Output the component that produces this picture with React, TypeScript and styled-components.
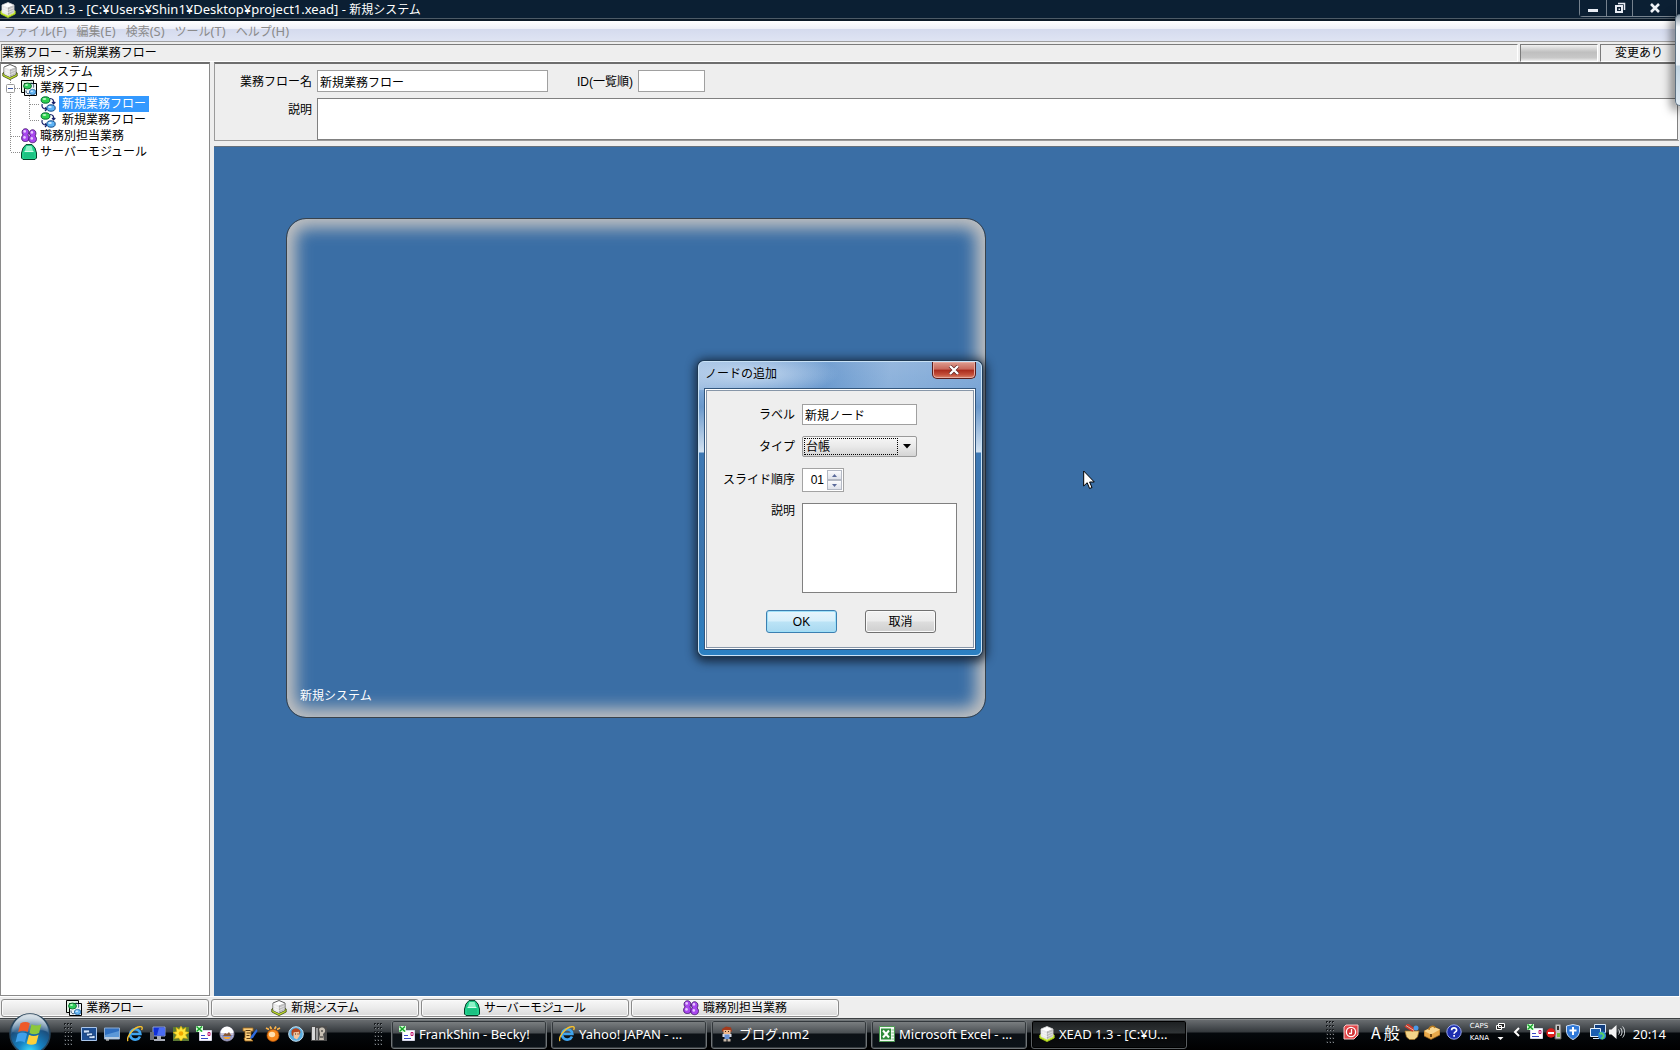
import React from "react";
import styled, { createGlobalStyle, css } from "styled-components";

const ui = `"Liberation Sans", "Noto Sans CJK JP", sans-serif`;
const shell = `"Noto Sans", "Noto Sans CJK JP", sans-serif`;

const GlobalStyle = createGlobalStyle`
  * { box-sizing: border-box; }
  body { margin: 0; background: #eeeeee; }
  button, input, select, textarea { font: inherit; color: inherit; margin: 0; border-radius: 0; }
  svg { display: block; flex: none; }
`;

const Desktop = styled.div`
  position: relative;
  display: flex;
  flex-direction: column;
  height: 100vh;
  overflow: hidden;
  background: #eeeeee;
  color: #000;
  font: 12px/16px ${ui};
`;

/* ---------- window chrome ---------- */
const TitleBar = styled.header`
  display: flex;
  align-items: flex-start;
  height: 21px;
  flex: none;
  background: linear-gradient(#0b1f33 0 18px, #4d5a66 18px 19px, #0a1826 19px);
  color: #fff;
  font-family: ${shell};
`;
const TitleText = styled.h1`
  flex: 1;
  margin: 0;
  padding: 1px 5px;
  font-size: 12px;
  font-weight: 400;
  line-height: 17px;
  white-space: pre;
`;
const Latin = styled.span`
  font-size: 13px;
`;
const TitleIcon = styled.span`
  padding-top: 2px;
`;
const WindowButtons = styled.div`
  display: flex;
  height: 17px;
  margin-right: 3px;
  border: 1px solid #76828e;
  border-top: 0;
  border-radius: 0 0 4px 4px;
`;
const WindowButton = styled.button<{ $wide?: boolean }>`
  display: flex;
  align-items: center;
  justify-content: center;
  width: ${(p) => (p.$wide ? 44 : 26)}px;
  padding: 0;
  border: 0;
  background: #0b1f33;
  & + & { border-left: 1px solid #76828e; }
`;
const MenuBar = styled.nav`
  display: flex;
  gap: 10px;
  height: 21px;
  flex: none;
  padding: 0 4px;
  background: linear-gradient(#ffffff, #eef0f8 40%, #d5dbee 42%, #dfe4f3);
  border-bottom: 1px solid #a0a0a0;
`;
const MenuItem = styled.button`
  padding: 0;
  border: 0;
  background: none;
  color: #8b8b8b;
  line-height: 20px;
  font-family: ${shell};
`;

const StatusRow = styled.div`
  display: flex;
  gap: 2px;
  height: 18px;
  flex: none;
  margin-top: 2px;
  padding: 0 2px 0 1px;
`;
const StatusCell = styled.div<{ $width?: number }>`
  ${(p) => (p.$width ? css`width: ${p.$width}px; text-align: center;` : css`flex: 1;`)}
  border: 1px solid #7b7b7b;
  border-right-color: #fff;
  border-bottom-color: #fff;
  line-height: 16px;
`;
const ProgressCell = styled(StatusCell)`
  background: linear-gradient(#f0f0f0, #bfbfbf 45%, #c8c8c8 80%, #eeeeee);
`;

/* ---------- work area ---------- */
const WorkArea = styled.div`
  display: grid;
  grid-template-columns: 210px 1fr;
  gap: 4px;
  flex: 1;
  min-height: 0;
`;
const TreePane = styled.aside`
  border: 1px solid #8a8a8a;
  border-top: 2px solid #6e6e6e;
  background: #fff;
`;
const TreeRow = styled.div`
  display: flex;
  height: 16px;
  padding-left: 1px;
`;
const TreeLabel = styled.span<{ $leaf?: boolean; $selected?: boolean }>`
  margin-left: 3px;
  padding: 0 ${(p) => (p.$leaf ? 3 : 0)}px;
  ${(p) => p.$selected && css`background: #3399ff; color: #fff;`}
`;
const Editor = styled.main`
  display: flex;
  flex-direction: column;
  min-width: 0;
  padding-right: 1px;
`;
const FormPanel = styled.section`
  display: grid;
  gap: 6px;
  padding-top: 6px;
  border: 1px solid #9a9a9a;
  border-top: 2px solid #6e6e6e;
  border-right: 0;
`;
const FormRow = styled.div`
  display: flex;
  gap: 5px;
`;
const FormLabel = styled.label<{ $auto?: boolean }>`
  width: ${(p) => (p.$auto ? "auto" : "97px")};
  margin-left: ${(p) => (p.$auto ? 24 : 0)}px;
  padding-top: 4px;
  text-align: right;
`;
const TextInput = styled.input<{ $width: number; $compact?: boolean }>`
  width: ${(p) => p.$width}px;
  height: ${(p) => (p.$compact ? 21 : 22)}px;
  padding: 0 2px;
  border: 1px solid #a0a0a0;
  background: #fff;
  outline: 0;
`;
const TextArea = styled.textarea<{ $height: number; $width?: number }>`
  ${(p) => (p.$width ? css`width: ${p.$width}px;` : css`flex: 1; margin-right: 1px;`)}
  height: ${(p) => p.$height}px;
  padding: 2px;
  border: 1px solid #808080;
  background: #fff;
  outline: 0;
  resize: none;
`;
const Canvas = styled.section`
  position: relative;
  flex: 1;
  margin-top: 5px;
  border-top: 1px solid #64707c;
  background: #3a6ea5;
`;
const SystemNode = styled.div`
  position: absolute;
  left: 72px;
  top: 71px;
  display: flex;
  align-items: flex-end;
  width: 700px;
  height: 500px;
  padding: 13px;
  border: 1px solid #38424c;
  border-radius: 20px;
  box-shadow: inset 0 0 16px 9px #c0c0c0;
  color: #fff;
`;
const Pointer = styled.svg`
  position: absolute;
  left: 869px;
  top: 323px;
`;

/* ---------- dialog ---------- */
const Dialog = styled.section`
  position: absolute;
  left: 698px;
  top: 361px;
  width: 284px;
  padding: 0 5px 5px;
  border: 1px solid #c9e2f6;
  border-radius: 6px;
  background:
    radial-gradient(ellipse 90px 22px at 50px 12px, #c4d8ef, transparent),
    linear-gradient(100deg, #ffffff40, #ffffff00 60px, #2f6eb430 130px, #ffffff20 190px, #ffffff00) 0 0 / 100% 28px no-repeat,
    linear-gradient(#86add9 0, #7aa5d5 28px, #6a98cb 45px, #d3e2f1 90px, #3d78b4 91px, #3b74ad 200px, #2b80c2);
  box-shadow: 0 0 0 1px #1f3a55, 1px 2px 10px 4px #101c2acc;
`;
const DialogTitle = styled.div`
  display: flex;
  justify-content: space-between;
  height: 26px;
  font-family: ${shell};
`;
const DialogName = styled.h2`
  margin: 0;
  padding: 4px 0 0 1px;
  font-size: 12px;
  font-weight: 400;
`;
const CloseButton = styled.button`
  display: flex;
  align-items: center;
  justify-content: center;
  width: 44px;
  height: 17px;
  padding: 0;
  border: 1px solid #5b1d1c;
  border-top: 0;
  border-radius: 0 0 5px 5px;
  box-shadow: inset 0 0 0 1px #e7aaa0;
  background: linear-gradient(#dd9d90, #c8675a 45%, #a92a1c 50%, #c4503c 80%, #d98a70);
`;
const DialogBody = styled.form`
  display: grid;
  gap: 11px;
  padding: 15px 0 16px;
  border: 1px solid #33567c;
  box-shadow: inset 0 0 0 1px #fff, inset 0 0 0 2px #8796a8;
  background: #eeeeee;
`;
const Field = styled.div<{ $top?: boolean }>`
  display: grid;
  grid-template-columns: 90px auto;
  justify-content: start;
  align-items: ${(p) => (p.$top ? "start" : "center")};
  gap: 7px;
`;
const FieldLabel = styled.label`
  text-align: right;
`;
const SelectBox = styled.span`
  display: grid;
  width: 115px;
  height: 21px;
  border: 1px solid #9a9a9a;
  border-radius: 2px;
  background: linear-gradient(#f7f7f7, #e9e9e9 50%, #d4d4d4);
  > * { grid-area: 1 / 1; }
  svg { justify-self: end; align-self: center; margin-right: 4px; pointer-events: none; }
`;
const Select = styled.select`
  appearance: none;
  width: 94px;
  margin: 1px;
  padding: 0 1px;
  border: 1px dotted #000;
  background: none;
  line-height: 14px;
  outline: 0;
`;
const Spinner = styled.span`
  display: grid;
  grid-template: 1fr 1fr / 1fr 15px;
  width: 42px;
  height: 24px;
  padding: 1px;
  border: 1px solid #a3a3a3;
  background: #fff;
`;
const SpinnerInput = styled.input`
  grid-row: span 2;
  width: 100%;
  min-width: 0;
  padding: 0 3px 0 0;
  border: 0;
  background: none;
  text-align: right;
  outline: 0;
`;
const SpinnerButton = styled.button`
  display: flex;
  align-items: center;
  justify-content: center;
  padding: 0;
  border: 1px solid #b4b9c4;
  background: linear-gradient(#fbfbfd, #dfe2ea);
`;
const DialogActions = styled.div`
  display: flex;
  gap: 28px;
  padding: 6px 0 0 61px;
`;
const PushButton = styled.button<{ $primary?: boolean }>`
  width: 71px;
  height: 23px;
  padding: 0;
  border: 1px solid ${(p) => (p.$primary ? "#3c7fb1" : "#707070")};
  border-radius: 3px;
  background: ${(p) =>
    p.$primary
      ? "linear-gradient(#e8f5fc, #d6effb 48%, #bbe3f6 52%, #a9d9f1)"
      : "linear-gradient(#f2f2f2, #ebebeb 48%, #dddddd 52%, #cfcfcf)"};
  box-shadow: inset 0 0 0 1px ${(p) => (p.$primary ? "#9fe0f8" : "#fafafa")};
`;

/* ---------- bottom bars ---------- */
const TabStrip = styled.nav`
  display: flex;
  gap: 2px;
  height: 22px;
  flex: none;
  padding: 2px 1px 1px;
  border-top: 1px solid #fff;
`;
const TabButton = styled.button`
  display: flex;
  align-items: center;
  justify-content: center;
  gap: 4px;
  width: 208px;
  padding: 0;
  border: 1px solid #8a8a8a;
  border-radius: 3px;
  background: linear-gradient(#f8f8f8, #ebebeb 50%, #dadada);
  box-shadow: inset 0 0 0 1px #fafafa;
  font-feature-settings: "palt";
  line-height: 16px;
`;
const Taskbar = styled.footer`
  position: relative;
  display: flex;
  align-items: center;
  height: 32px;
  flex: none;
  padding: 0 14px 0 64px;
  background: linear-gradient(#3c4043 0 1px, #85898b 1px 2px, #686c6f 2px, #34393d 14px, #04080c 15px, #000 100%);
  color: #fff;
  font: 13px/16px ${shell};
`;
const StartOrb = styled.button`
  position: absolute;
  left: 9px;
  top: -5px;
  padding: 0;
  border: 0;
  background: none;
`;
const QuickLaunch = styled.div`
  display: flex;
  gap: 7px;
  width: 293px;
  margin-left: 8px;
`;
const IconButton = styled.button`
  width: 16px;
  height: 16px;
  padding: 0;
  border: 0;
  background: none;
`;
const TaskList = styled.div`
  display: flex;
  gap: 4px;
  flex: 1;
  margin-left: 8px;
`;
const TaskButton = styled.button<{ $active?: boolean }>`
  display: flex;
  align-items: center;
  gap: 4px;
  width: 156px;
  height: 29px;
  padding: 0 7px;
  border: 1px solid ${(p) => (p.$active ? "#5a5e61" : "#6f7477")};
  border-radius: 3px;
  background: ${(p) =>
    p.$active
      ? "linear-gradient(#1c1f21, #303436 12px, #060708 13px, #0b0d0f)"
      : "linear-gradient(#7e8284, #4a4f53 12px, #0c1116 13px, #0b1218)"};
  box-shadow: inset 0 0 0 1px ${(p) => (p.$active ? "#000" : "#33383c")};
  white-space: nowrap;
`;
const Tray = styled.div`
  display: flex;
  align-items: center;
  gap: 4px;
  padding-bottom: 4px;
`;
const TrayGroup = styled.span<{ $gap: number; $before?: number }>`
  display: flex;
  align-items: center;
  gap: ${(p) => p.$gap}px;
  margin-left: ${(p) => p.$before ?? 0}px;
`;
const ImeText = styled.span`
  font: 16px/18px "Noto Sans CJK JP", sans-serif;
`;
const KeyLocks = styled.span`
  display: grid;
  grid-template-columns: 22px 9px;
  gap: 3px 4px;
  align-items: center;
  font: 7px/9px "DejaVu Sans", sans-serif;
`;
const Clock = styled.time`
  margin-left: 8px;
`;
const SidebarPeek = styled.div`
  position: absolute;
  right: 0;
  top: 14px;
  width: 5px;
  height: 92px;
  border: 1px solid #5d7080;
  border-right: 0;
  border-radius: 5px 0 0 5px;
  background: linear-gradient(#8a9aa8, #f4f9fd 12px, #eef5fa 50px, #c3d6e4 51px, #dfeaf2);
  box-shadow: -2px 3px 10px 2px #00000080;
`;

/* ---------- drawings ---------- */
const Icon = ({ children }: { children: React.ReactNode }) => (
  <svg width="16" height="16" viewBox="0 0 16 16" aria-hidden="true">{children}</svg>
);
const CubeIcon = ({ dark }: { dark?: boolean }) => (
  <Icon>
    <path d="M.8 9 8 6l7.200 3v3L8 15.600.8 12z" fill="#c6ea28" stroke={dark ? "#3a4410" : "#a4cc1c"} strokeWidth=".8" />
    <path d="M2 3 8 .5 14 3v7.500L8 13.300 2 10.500z" fill="#fff" stroke={dark ? "#333" : "#d8d8d8"} strokeWidth=".8" />
    <path d="M8 5.600 13.600 3.200v7L8 12.900z" fill="#a9a9a9" />
    <path d="M2.400 3.300 8 5.600v7.300l-5.600-2.600z" fill="#e2e2e2" />
    <path d="M4.200 4.200v7M6 5v7M2.400 5.800 8 8.200l5.600-2.400M2.400 8.200 8 10.600l5.600-2.400M10 4.800v7M12 4v7" stroke="#fff" strokeWidth=".6" fill="none" opacity=".85" />
  </Icon>
);
const FlowGroupIcon = () => (
  <Icon>
    <path d="M.5 .5h12v12H.5z" fill="#e4f4e6" stroke="#000" />
    <path d="M3.500 3.500h12v12h-12z" fill="#eef4f8" stroke="#000" />
    <path d="M9 3.500c3-1 4 1 3.500 4M5 10.500c0 3 1.500 3.500 3.500 3" stroke="#246" fill="none" />
    <ellipse cx="6.500" cy="6" rx="4" ry="3" fill="#2fce5c" stroke="#0a5a24" strokeWidth=".8" />
    <ellipse cx="5.500" cy="5" rx="1.500" ry=".9" fill="#b6f7c0" />
    <ellipse cx="11.600" cy="12" rx="3.300" ry="2.600" fill="#6bb8f4" stroke="#1b5f9c" strokeWidth=".8" />
    <ellipse cx="10.800" cy="11.200" rx="1.300" ry=".8" fill="#d5edff" />
  </Icon>
);
const FlowIcon = () => (
  <Icon>
    <path d="M10 2.500c3 0 4 2 3.600 5M12 6l1.600 1.800L15.300 6M2.200 8c-1 3 .6 5 4.500 5M5 11.400 7 13 5 15" stroke="#15206a" fill="none" strokeWidth="1.200" />
    <ellipse cx="5.500" cy="4" rx="4.400" ry="3.200" fill="#2fd24f" stroke="#063" />
    <ellipse cx="4.500" cy="3" rx="1.800" ry="1" fill="#b6f7c0" />
    <ellipse cx="11" cy="12" rx="4.200" ry="3.200" fill="#5fb4f6" stroke="#114a86" />
    <ellipse cx="10" cy="11" rx="1.800" ry="1" fill="#d5edff" />
  </Icon>
);
const RolesIcon = () => (
  <Icon>
    <g fill="#a848ee" stroke="#3a0a66" strokeWidth=".8">
      <path d="M1 12c-1-3 .2-4.500 1.200-5C-.2 4.500 1.400.7 4.500.7S9 4.500 6.800 7c1.500 1 2 3 1 5-1.300 2-5.500 2-6.800 0z" />
      <path d="M8.200 13c-1-3 .2-4.500 1.200-5C7.500 5.500 8.600 1.700 11.600 1.700S16 5.500 14 8c1.500 1 2 3 1 5-1.300 2.300-5.500 2.300-6.800 0z" />
    </g>
    <g fill="#e8c8ff"><circle cx="3.700" cy="3.400" r="1.300" /><circle cx="10.900" cy="4.400" r="1.300" /><circle cx="3.500" cy="9.400" r="1.300" /><circle cx="10.800" cy="10.400" r="1.300" /></g>
  </Icon>
);
const ServerIcon = () => (
  <Icon>
    <path d="M5 .6h6L14 4l1.500 5v5L14 15.500H2L.5 14V9L2 4z" fill="#20cf8b" stroke="#063f28" />
    <path d="M5.500 2h5l1.500 5H4z" fill="#8ff2c8" />
    <path d="M3 8.500h10V14H3z" fill="#1cc282" />
    <path d="M3.500 7.500h9" stroke="#d2ffe9" />
  </Icon>
);
const MailIcon = () => (
  <Icon>
    <path d="M3.500 4.500h12v10h-12z" fill="#fff" stroke="#d7d7e8" />
    <path d="M0 0h7v6H0z" fill="#d9ffd9" />
    <path d="m.5.500 5.500 5M6 .5l-5.500 5" stroke="#18a52c" strokeWidth="1.500" />
    <path d="M12 6.500h2v3h-2z" fill="#fff" stroke="#c01870" /><path d="M5 9.500h4M5 12.500h7" stroke="#3848c8" />
  </Icon>
);
const IeIcon = () => (
  <Icon>
    <path d="M13 10.500A5.200 5.200 0 1 1 13.400 8H4.500" fill="none" stroke="#3fa4ee" strokeWidth="2.600" />
    <path d="M1 15C-1 12 5 3 11 1c4-1.300 5 .5 3.600 3" fill="none" stroke="#f5c02e" strokeWidth="1.400" />
  </Icon>
);
const FigureIcon = () => (
  <Icon>
    <path d="M3 3 7 .5l5 1 1 4H3z" fill="#a33a1c" /><path d="M4.500 4h7v4h-7z" fill="#f0b78a" /><path d="M6 5.500h1M9 5.500h1" stroke="#321" />
    <path d="M3.500 8h9v3h-9z" fill="#d8dce8" /><path d="M5.500 8.500h5v4.500h-5z" fill="#6a92d4" />
    <path d="M4.500 13h3v2.500h-3zM8.500 13h3v2.500h-3z" fill="#c7b8a8" />
  </Icon>
);
const ExcelIcon = () => (
  <Icon>
    <path d="M.5.5h15v15H.5z" fill="#f4fbf4" stroke="#4c9a52" /><path d="M2 2.500h10v11H2z" fill="#2f8a3a" />
    <path d="m4 4.500 6 7M10 4.500l-6 7" stroke="#fff" strokeWidth="2" /><path d="M12.500 4H15M12.500 7H15M12.500 10H15M12.500 13H15" stroke="#7cbb80" />
  </Icon>
);
const SwitchIcon = () => (
  <Icon><path d="M.5 1.500h15v13H.5z" fill="#1e4f94" stroke="#a9c5ea" /><path d="M2.500 4h6v3h-6zM5.500 7h6v3h-6zM8 9.500h6v3H8z" fill="#cfe2fa" stroke="#12386e" strokeWidth=".7" /></Icon>
);
const DesktopIcon = () => (
  <Icon><path d="M.5 2h15v11H.5z" fill="#2f6fc0" stroke="#8facd0" /><path d="M1 9 15 5v6H1z" fill="#5c98d8" /><path d="M1 11h14v2H1z" fill="#b7cbe0" /><path d="M2 14h3" stroke="#fff" /></Icon>
);
const MonitorIcon = () => (
  <Icon><path d="M3 1h12v9H3z" fill="#1030d8" stroke="#8ea0d8" /><path d="M9 2h6v7H7z" fill="#4a6cf4" /><path d="M0 6h4v8H0z" fill="#6b6f7a" /><path d="M7 10h4v3H7zM4 13h11v2H4z" fill="#a8acb8" /></Icon>
);
const FlowerIcon = () => (
  <Icon>
    <path d="M0 1h16v14H0z" fill="#5c7a34" />
    <path d="M8 0 9.800 3.500 13 1.500l-.8 4L16 6.500l-3.500 2.300 2 3.700-4.200-.6L8 15l-2.300-3.100-4.200.6 2-3.700L0 6.500l3.800-1-.8-4 3.200 2z" fill="#ffe43a" stroke="#d8aa00" strokeWidth=".5" />
    <circle cx="8" cy="7.500" r="2.300" fill="#f2a800" />
  </Icon>
);
const DiscIcon = () => (
  <Icon><circle cx="8" cy="8" r="7" fill="#c8c4d8" stroke="#8e8aa6" /><path d="M1.500 7a6.500 6.500 0 0 1 13 0z" fill="#fff" /><path d="M2 9h12c-1 3-3 5.500-6 5.500S3 12 2 9z" fill="#8894cc" /><path d="m4 10 2-3 2 1 2-2 2.500 4z" fill="#8a5a38" /><path d="M4 11h8l-2 2H6z" fill="#f2a638" /></Icon>
);
const NotesIcon = () => (
  <Icon><path d="M1 2h10v3H9v8l2 2H3l-1-3h1V5H1z" fill="#f8cc7c" stroke="#a36a1a" strokeWidth=".8" /><path d="M3.500 4.500h5M4.500 7h4M4.500 9.500h3M4.500 12.500h4" stroke="#5b3a10" /><path d="m9 10 5.500-7 1 2-4.500 7-3 1z" fill="#2f6be0" /></Icon>
);
const PomIcon = () => (
  <Icon><circle cx="8" cy="9.500" r="6" fill="#f6871c" stroke="#b65205" strokeWidth=".7" /><ellipse cx="7" cy="8.500" rx="3.200" ry="2.800" fill="#ffdfae" /><path d="m1 2 3 1.500M5 .5 6.500 3M11 .5 9.500 3M15 2l-3 1.500" stroke="#ffb54a" strokeWidth="1.700" /></Icon>
);
const PortraitIcon = () => (
  <Icon><circle cx="8" cy="8" r="7.300" fill="#58acdf" stroke="#c7e2f4" /><path d="M3.500 5c2-4 8-3.500 9 1l-1 3-1.500-3-4 .5-1 4-1.500-2z" fill="#b2451d" /><path d="M5.500 6.500 11 5.800l.6 4L9 13.500 6 12z" fill="#f6c39a" /><path d="M7 8h1M9.500 8h1" stroke="#321" /></Icon>
);
const StatueIcon = () => (
  <Icon><path d="M0 0h16v15H0z" fill="#4b4b4b" /><path d="M1 1h3v13H1z" fill="#d8d8d8" /><path d="M5 2h2v12H5z" fill="#9b9b9b" /><path d="M8 3c3-3 7-1 6 3l-2 2 1 6H8l1-6z" fill="#c8c0b4" /><path d="M10 5h2M9 11h3" stroke="#222" /></Icon>
);
const StampIcon = () => (
  <Icon><path d="M3 1h12v10l-4 4H1V3z" fill="#e4474a" stroke="#f9c9c9" /><circle cx="8" cy="8" r="4.600" fill="#d23236" stroke="#fff" strokeWidth="1.300" /><path d="M8.500 5v4M6 9.500h3" stroke="#fff" strokeWidth="1.300" /></Icon>
);
const BrushPotIcon = () => (
  <Icon><path d="M1 7h14l-1.500 6-3 2.500h-5L2.500 13z" fill="#f2d489" stroke="#a87624" strokeWidth=".7" /><path d="m1 2 8 5M3 0l8 6" stroke="#d1392b" strokeWidth="2" /><path d="M2 1.500 10 6.500" stroke="#f6b8a0" /><circle cx="12" cy="4" r="2.500" fill="#4a9ae8" /></Icon>
);
const ToolboxIcon = () => (
  <Icon><path d="m0 7 9-4.500 7 3v5.500l-9 4.500-7-3.500z" fill="#e8a94a" stroke="#8c5a16" strokeWidth=".7" /><path d="m0 7 7 3.500 9-5-7-3z" fill="#f8d690" /><path d="M5 6c0-4 5-5 6-2" stroke="#b87b20" fill="none" strokeWidth="1.400" /><path d="M6 10h2v3H6z" fill="#704510" /></Icon>
);
const HelpIcon = () => (
  <Icon><circle cx="8" cy="8" r="7.200" fill="#1d2fae" stroke="#9aa8ee" /><path d="M5.600 6.200c0-3 5-3 5 0 0 1.800-2.500 1.600-2.500 3.600M8.100 11v1.800" stroke="#fff" strokeWidth="1.700" fill="none" /></Icon>
);
const BlockedIcon = () => (
  <Icon><path d="M9 0h6v15H9z" fill="#c9c9c9" stroke="#555" /><path d="M11 2h2v4h-2z" fill="#333" /><path d="M11 9h3v4h-3z" fill="#7cc04a" /><circle cx="5" cy="9" r="4.700" fill="#e0201c" /><path d="M2 9h6" stroke="#fff" strokeWidth="2" /></Icon>
);
const ShieldIcon = () => (
  <Icon><path d="M8 .5 14.500 2v5c0 4-3 7-6.500 8.500C4.500 14 1.500 11 1.500 7V2z" fill="#2f78d8" stroke="#cfe0f6" /><path d="M8 3v8M4.500 6.500h7" stroke="#fff" strokeWidth="2" /></Icon>
);
const NetworkIcon = () => (
  <Icon><path d="M4.500.5h11v8h-11z" fill="#123f80" stroke="#d5e6f8" /><path d="M.5 4.500h10v8H.5z" fill="#1c5fb0" stroke="#e6f1fb" /><path d="M3 14.500h6" stroke="#d5e6f8" /><circle cx="12" cy="11.500" r="4" fill="#2c86d8" /><path d="M9.500 10c2-2 3 0 4 1s-1 3-2 4" stroke="#58d060" strokeWidth="2" fill="none" /></Icon>
);
const VolumeIcon = () => (
  <Icon><path d="M0 5.500h2.500L7.500 1v14l-5-4.500H0z" fill="#f2f2f2" /><path d="M9.500 5.500c1.300 1.500 1.300 3.500 0 5M11.500 4c2 2.500 2 5.500 0 8M13.600 2.500c2.800 3.500 2.800 7.500 0 11" stroke="#d8dde0" fill="none" /></Icon>
);
const OrbDrawing = () => (
  <svg width="42" height="42" viewBox="0 0 42 42" aria-hidden="true">
    <defs>
      <radialGradient id="orb" cx="50%" cy="95%" r="85%">
        <stop offset="0" stopColor="#3fe0ff" /><stop offset=".35" stopColor="#1683c4" /><stop offset=".75" stopColor="#1b4f7e" /><stop offset="1" stopColor="#7f9db4" />
      </radialGradient>
      <linearGradient id="gloss" x1="0" y1="0" x2="0" y2="1"><stop offset="0" stopColor="#fff" stopOpacity=".75" /><stop offset="1" stopColor="#fff" stopOpacity=".1" /></linearGradient>
    </defs>
    <circle cx="21" cy="21" r="20" fill="url(#orb)" stroke="#28445a" strokeWidth="1.500" />
    <path d="M3 19a18 18 0 0 1 36 0c-10-5-24 3-36 0z" fill="url(#gloss)" />
    <g transform="translate(-3 -3) scale(1.160)">
      <path d="M12.500 11.500c3-1.500 5.500-1.500 8 0l-1.800 7.500c-2.700-1.500-5-1.500-8.200 0z" fill="#ee5a28" />
      <path d="M22 12.300c3 1.500 5.500 1.400 8.500 0l-2 7.500c-3 1.400-5.500 1.400-8.300 0z" fill="#8cc83c" />
      <path d="M10 20.500c3-1.500 5.500-1.500 8.200 0l-2 7.500c-2.700-1.500-5-1.500-8 0z" fill="#3fa0ea" />
      <path d="M19.800 21.300c3 1.500 5.300 1.400 8.300 0l-2 7.500c-3 1.400-5.500 1.400-8.300 0z" fill="#fdd03a" />
    </g>
  </svg>
);
const Grip = () => (
  <svg width="9" height="22" viewBox="0 0 9 22" aria-hidden="true">
    {[0, 4, 8, 12, 16, 20].map((y) => (
      <g key={y} fill="#1a1d20">
        {[0, 3, 6].map((x) => (
          <g key={x}><rect x={x} y={y} width="2" height="2" /><rect x={x + 1} y={y + 1} width="1" height="1" fill="#82878b" /></g>
        ))}
      </g>
    ))}
  </svg>
);

type GuideKind = "pipe" | "tee" | "elbow" | "expander";
const Guide = ({ kind }: { kind: GuideKind }) => (
  <svg width="19" height="16" viewBox="0 0 19 16" aria-hidden="true">
    <g stroke="#8c8c8c" strokeDasharray="1 1" fill="none">
      <path d={kind === "elbow" ? "M8.500 0v8" : "M8.500 0v16"} />
      {kind !== "pipe" && <path d="M9 8.500h10" />}
    </g>
    {kind === "expander" && (
      <g><rect x="4.500" y="4.500" width="8" height="8" rx="1" fill="#fff" stroke="#9a9a9a" /><path d="M6 8.500h5" stroke="#3c55a0" /></g>
    )}
  </svg>
);

const tree: { label: string; icon: React.ReactNode; guides: GuideKind[]; selected?: boolean }[] = [
  { label: "新規システム", icon: <CubeIcon dark />, guides: [] },
  { label: "業務フロー", icon: <FlowGroupIcon />, guides: ["expander"] },
  { label: "新規業務フロー", icon: <FlowIcon />, guides: ["pipe", "tee"], selected: true },
  { label: "新規業務フロー", icon: <FlowIcon />, guides: ["pipe", "elbow"] },
  { label: "職務別担当業務", icon: <RolesIcon />, guides: ["tee"] },
  { label: "サーバーモジュール", icon: <ServerIcon />, guides: ["elbow"] },
];
const tabs = [
  { label: "業務フロー", icon: <FlowGroupIcon /> },
  { label: "新規システム", icon: <CubeIcon dark /> },
  { label: "サーバーモジュール", icon: <ServerIcon /> },
  { label: "職務別担当業務", icon: <RolesIcon /> },
];
const launchers = [
  { label: "ウィンドウの切り替え", icon: <SwitchIcon /> },
  { label: "デスクトップの表示", icon: <DesktopIcon /> },
  { label: "Internet Explorer", icon: <IeIcon /> },
  { label: "コンピュータ", icon: <MonitorIcon /> },
  { label: "フォト", icon: <FlowerIcon /> },
  { label: "Becky!", icon: <MailIcon /> },
  { label: "ディスク", icon: <DiscIcon /> },
  { label: "ノート", icon: <NotesIcon /> },
  { label: "ツール", icon: <PomIcon /> },
  { label: "ポートレート", icon: <PortraitIcon /> },
  { label: "画像", icon: <StatueIcon /> },
];
const tasks = [
  { label: "FrankShin - Becky!", icon: <MailIcon /> },
  { label: "Yahoo! JAPAN - ...", icon: <IeIcon /> },
  { label: "ブログ.nm2", icon: <FigureIcon /> },
  { label: "Microsoft Excel - ...", icon: <ExcelIcon /> },
  { label: "XEAD 1.3 - [C:¥U...", icon: <CubeIcon />, active: true },
];
const menus = [
  ["ファイル", "(F)"],
  ["編集", "(E)"],
  ["検索", "(S)"],
  ["ツール", "(T)"],
  ["ヘルプ", "(H)"],
];

export default function App() {
  return (
    <Desktop>
      <GlobalStyle />
      <TitleBar>
        <TitleIcon><CubeIcon /></TitleIcon>
        <TitleText><Latin>XEAD 1.3 - [C:¥Users¥Shin1¥Desktop¥project1.xead] - </Latin>新規システム</TitleText>
        <WindowButtons>
          <WindowButton aria-label="最小化">
            <svg width="12" height="12" viewBox="0 0 12 12"><path d="M1 7h10v3H1z" fill="#e8ecf4" /></svg>
          </WindowButton>
          <WindowButton aria-label="元に戻す">
            <svg width="12" height="12" viewBox="0 0 12 12"><path d="M4 1.500h6.500V8" stroke="#e8ecf4" strokeWidth="1.500" fill="none" /><path d="M2 4h6v6H2z" fill="#0b1f33" stroke="#e8ecf4" strokeWidth="2" /><path d="M4.500 6.500h1.500V8H4.500z" fill="#e8ecf4" /></svg>
          </WindowButton>
          <WindowButton aria-label="閉じる" $wide>
            <svg width="12" height="10" viewBox="0 0 12 10"><path d="m2 1 8 8M10 1 2 9" stroke="#eef1f6" strokeWidth="2.600" /></svg>
          </WindowButton>
        </WindowButtons>
      </TitleBar>
      <MenuBar>{menus.map(([name, key]) => <MenuItem key={key}>{name}<Latin>{key}</Latin></MenuItem>)}</MenuBar>
      <StatusRow>
        <StatusCell>業務フロー - 新規業務フロー</StatusCell>
        <ProgressCell $width={78} />
        <StatusCell $width={78}>変更あり</StatusCell>
      </StatusRow>

      <WorkArea>
        <TreePane>
          {tree.map((n, i) => (
            <TreeRow key={i}>
              {n.guides.map((g, j) => <Guide key={j} kind={g} />)}
              {n.icon}
              <TreeLabel $leaf={n.guides.length > 1} $selected={n.selected}>{n.label}</TreeLabel>
            </TreeRow>
          ))}
        </TreePane>
        <Editor>
          <FormPanel>
            <FormRow>
              <FormLabel htmlFor="flow-name">業務フロー名</FormLabel>
              <TextInput id="flow-name" $width={231} defaultValue="新規業務フロー" />
              <FormLabel htmlFor="flow-id" $auto>ID(一覧順)</FormLabel>
              <TextInput id="flow-id" $width={67} />
            </FormRow>
            <FormRow>
              <FormLabel htmlFor="flow-note">説明</FormLabel>
              <TextArea id="flow-note" $height={42} />
            </FormRow>
          </FormPanel>
          <Canvas>
            <SystemNode>新規システム</SystemNode>
            <Pointer width="12" height="20" viewBox="0 0 12 20" aria-hidden="true">
              <path d="M.7 1v15l3.500-3.300 2.400 5.800 2.400-1-2.400-5.500h4.700z" fill="#fff" stroke="#000" strokeWidth="1" />
            </Pointer>
          </Canvas>
        </Editor>
      </WorkArea>

      <TabStrip>
        {tabs.map((t) => <TabButton key={t.label}>{t.icon}{t.label}</TabButton>)}
      </TabStrip>

      <Taskbar>
        <StartOrb aria-label="スタート"><OrbDrawing /></StartOrb>
        <Grip />
        <QuickLaunch>
          {launchers.map((l) => <IconButton key={l.label} aria-label={l.label}>{l.icon}</IconButton>)}
        </QuickLaunch>
        <Grip />
        <TaskList>
          {tasks.map((t) => <TaskButton key={t.label} $active={t.active}>{t.icon}{t.label}</TaskButton>)}
        </TaskList>
        <Tray>
          <Grip />
          <TrayGroup $gap={4} $before={4}>
            <StampIcon />
            <TrayGroup $gap={3} $before={8}><ImeText>A</ImeText><ImeText>般</ImeText></TrayGroup>
            <BrushPotIcon />
            <ToolboxIcon />
          </TrayGroup>
          <TrayGroup $gap={8} $before={2}>
            <HelpIcon />
            <KeyLocks>
              <span>CAPS</span>
              <svg width="9" height="7" viewBox="0 0 9 7"><path d="M2.500.5h6v4h-6zM.5 2.500h5v4h-5z" fill="#222" stroke="#fff" /></svg>
              <span>KANA</span>
              <svg width="9" height="7" viewBox="0 0 9 7"><path d="M1.500 2h6l-3 3z" fill="#fff" /></svg>
            </KeyLocks>
            <svg width="7" height="10" viewBox="0 0 7 10"><path d="M6 1 2 5l4 4" stroke="#fff" strokeWidth="2" fill="none" /></svg>
          </TrayGroup>
          <TrayGroup $gap={3} $before={3}>
            <MailIcon /><BlockedIcon /><ShieldIcon />
          </TrayGroup>
          <TrayGroup $gap={3} $before={5}>
            <NetworkIcon /><VolumeIcon />
          </TrayGroup>
        </Tray>
        <Clock>20:14</Clock>
      </Taskbar>

      <Dialog role="dialog" aria-label="ノードの追加">
        <DialogTitle>
          <DialogName>ノードの追加</DialogName>
          <CloseButton aria-label="閉じる">
            <svg width="12" height="10" viewBox="0 0 12 10"><path d="m2 1 8 8M10 1 2 9" stroke="#5a2020" strokeWidth="3.600" /><path d="m2 1 8 8M10 1 2 9" stroke="#fff" strokeWidth="2.400" /></svg>
          </CloseButton>
        </DialogTitle>
        <DialogBody onSubmit={(e) => e.preventDefault()}>
          <Field>
            <FieldLabel htmlFor="node-label">ラベル</FieldLabel>
            <TextInput id="node-label" $width={115} $compact defaultValue="新規ノード" />
          </Field>
          <Field>
            <FieldLabel htmlFor="node-type">タイプ</FieldLabel>
            <SelectBox>
              <Select id="node-type"><option>台帳</option></Select>
              <svg width="10" height="5" viewBox="0 0 10 5"><path d="M1 0h8L5 4.500z" /></svg>
            </SelectBox>
          </Field>
          <Field>
            <FieldLabel htmlFor="node-order">スライド順序</FieldLabel>
            <Spinner>
              <SpinnerInput id="node-order" defaultValue="01" />
              <SpinnerButton type="button" aria-label="増やす">
                <svg width="5" height="3" viewBox="0 0 5 3"><path d="M0 3h5L2.500 0z" fill="#5a6a9a" /></svg>
              </SpinnerButton>
              <SpinnerButton type="button" aria-label="減らす">
                <svg width="5" height="3" viewBox="0 0 5 3"><path d="M0 0h5L2.500 3z" fill="#5a6a9a" /></svg>
              </SpinnerButton>
            </Spinner>
          </Field>
          <Field $top>
            <FieldLabel htmlFor="node-note">説明</FieldLabel>
            <TextArea id="node-note" $width={155} $height={90} />
          </Field>
          <DialogActions>
            <PushButton $primary>OK</PushButton>
            <PushButton type="button">取消</PushButton>
          </DialogActions>
        </DialogBody>
      </Dialog>
      <SidebarPeek />
    </Desktop>
  );
}
